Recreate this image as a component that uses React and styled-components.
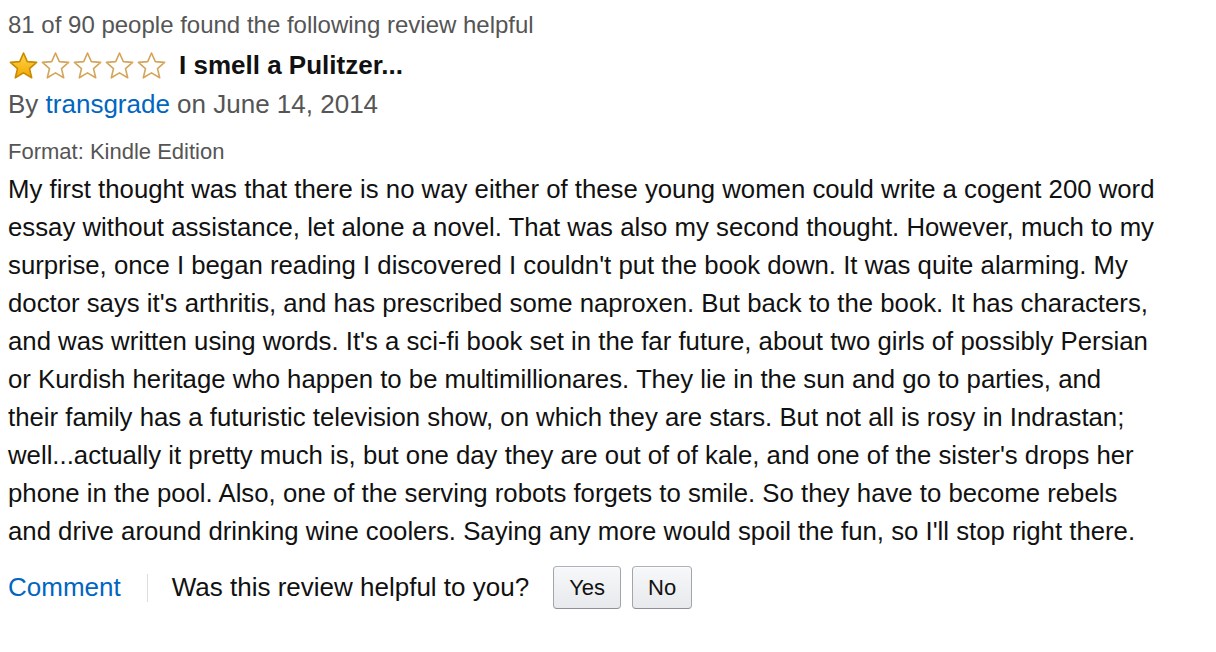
import React from "react";
import styled, { createGlobalStyle } from "styled-components";

const GlobalStyle = createGlobalStyle`
    body {
        margin: 0;
        background: #fff;
        font-family: "Liberation Sans", Arial, sans-serif;
    }
`;

const Review = styled.div`
    width: 1170px;
    padding: 11px 8px 0;
    color: #111;
`;

const Helpful = styled.div`
    font-size: 24px;
    line-height: 28px;
    color: #555;
`;

const TitleRow = styled.div`
    display: flex;
    align-items: center;
    gap: 12px;
    margin-top: 11px;
    height: 30px;
`;

const Stars = styled.div`
    display: flex;
    gap: 1px;
`;

const Title = styled.span`
    font-size: 26px;
    font-weight: bold;
    color: #111;
`;

const Byline = styled.div`
    margin-top: 9px;
    font-size: 26px;
    line-height: 30px;
    color: #555;
`;

const Link = styled.a`
    color: #0066c0;
    text-decoration: none;
`;

const Format = styled.div`
    margin-top: 20px;
    font-size: 22px;
    line-height: 26px;
    color: #555;
`;

const Body = styled.p`
    margin: 5px 0 0;
    font-size: 25.75px;
    line-height: 38px;
    color: #111;
`;

const Line = styled.span`
    display: block;
    white-space: nowrap;
`;

const Footer = styled.div`
    display: flex;
    align-items: center;
    margin-top: 16px;
    font-size: 26px;
`;

const Divider = styled.span`
    width: 1px;
    height: 28px;
    background: #ddd;
    margin: 0 24px 0 26px;
`;

const Question = styled.span`
    color: #111;
    margin-right: 24px;
`;

const VoteButton = styled.button`
    font-family: inherit;
    font-size: 22px;
    color: #111;
    height: 43px;
    padding: 0 15px;
    margin-right: 11px;
    border: 1px solid #adb1b8;
    border-color: #adb1b8 #a2a6ac #8d9096;
    border-radius: 4px;
    background: linear-gradient(to bottom, #f7f8fa, #e7e9ec);
    box-shadow: inset 0 1px 0 rgba(255, 255, 255, 0.6);
`;

function Star({ filled, id }) {
    return (
        <svg width="31" height="29" viewBox="0 0 31 29">
            {filled && (
                <defs>
                    <linearGradient id={id} x1="0" y1="0" x2="0" y2="1">
                        <stop offset="0" stopColor="#ffd34d" />
                        <stop offset="1" stopColor="#f2a900" />
                    </linearGradient>
                </defs>
            )}
            <path
                d="M15.5 2 L19.3 10.6 L28.6 11.4 L21.5 17.6 L23.7 26.8 L15.5 21.9 L7.3 26.8 L9.5 17.6 L2.4 11.4 L11.7 10.6 Z"
                fill={filled ? `url(#${id})` : "#fff"}
                stroke={filled ? "#c98a00" : "#d4a55a"}
                strokeWidth="1.6"
                strokeLinejoin="round"
            />
        </svg>
    );
}

const lines = [
    "My first thought was that there is no way either of these young women could write a cogent 200 word",
    "essay without assistance, let alone a novel. That was also my second thought. However, much to my",
    "surprise, once I began reading I discovered I couldn't put the book down. It was quite alarming. My",
    "doctor says it's arthritis, and has prescribed some naproxen. But back to the book. It has characters,",
    "and was written using words. It's a sci-fi book set in the far future, about two girls of possibly Persian",
    "or Kurdish heritage who happen to be multimillionares. They lie in the sun and go to parties, and",
    "their family has a futuristic television show, on which they are stars. But not all is rosy in Indrastan;",
    "well...actually it pretty much is, but one day they are out of of kale, and one of the sister's drops her",
    "phone in the pool. Also, one of the serving robots forgets to smile. So they have to become rebels",
    "and drive around drinking wine coolers. Saying any more would spoil the fun, so I'll stop right there.",
];

export default function App() {
    return (
        <>
            <GlobalStyle />
            <Review>
                <Helpful>81 of 90 people found the following review helpful</Helpful>
                <TitleRow>
                    <Stars>
                        {[0, 1, 2, 3, 4].map((i) => (
                            <Star key={i} filled={i === 0} id={`star-${i}`} />
                        ))}
                    </Stars>
                    <Title>I smell a Pulitzer...</Title>
                </TitleRow>
                <Byline>
                    By <Link href="#">transgrade</Link> on June 14, 2014
                </Byline>
                <Format>Format: Kindle Edition</Format>
                <Body>
                    {lines.map((l, i) => (
                        <Line key={i}>{l}</Line>
                    ))}
                </Body>
                <Footer>
                    <Link href="#">Comment</Link>
                    <Divider />
                    <Question>Was this review helpful to you?</Question>
                    <VoteButton>Yes</VoteButton>
                    <VoteButton>No</VoteButton>
                </Footer>
            </Review>
        </>
    );
}
